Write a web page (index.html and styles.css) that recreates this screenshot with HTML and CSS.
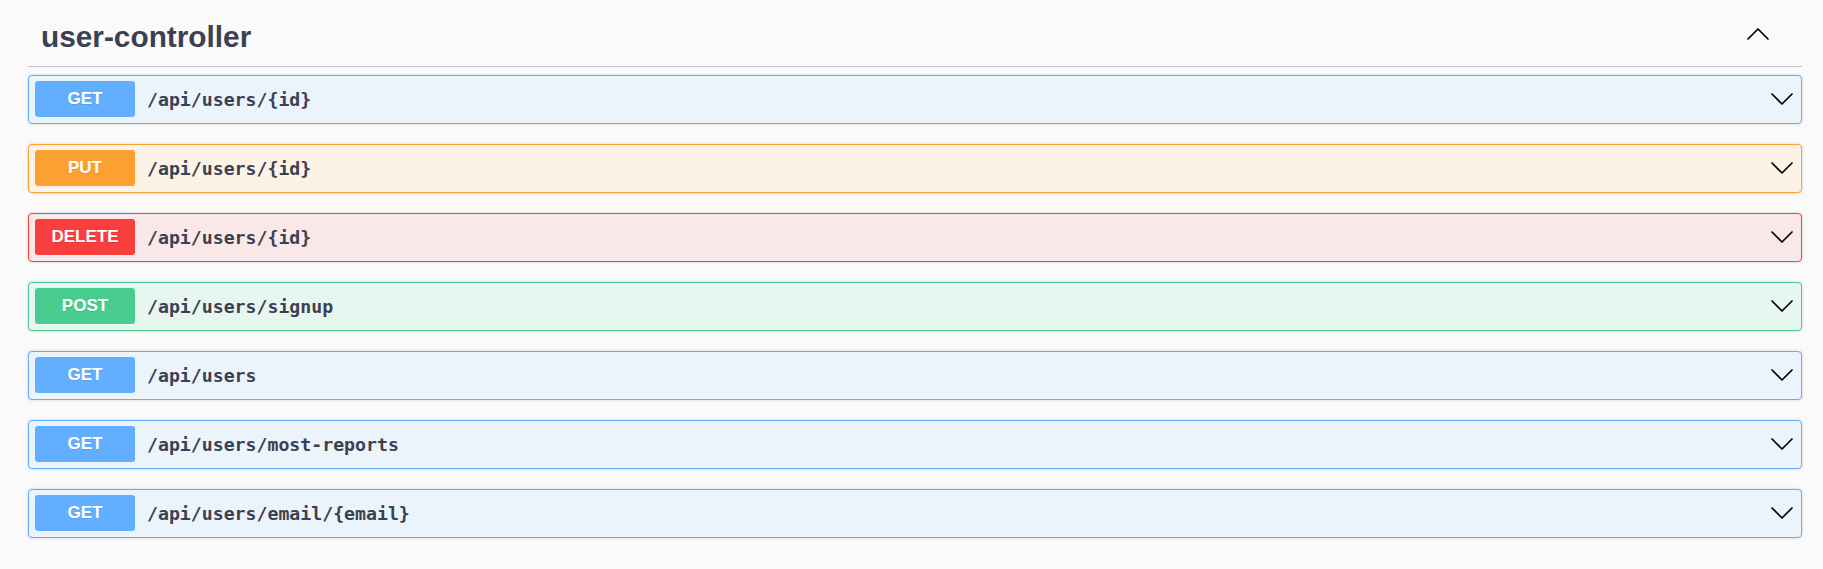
FILE: index.html
```html
<!DOCTYPE html>
<html lang="en">
<head>
<meta charset="utf-8">
<title>user-controller</title>
<link rel="stylesheet" href="styles.css">
</head>
<body>
<div class="tag-section">
  <div class="tag-header">
    <h3 class="tag-title">user-controller</h3>
    <svg class="chev-up" width="22" height="12" viewBox="0 0 22 12"><polyline points="1,11 11,1 21,11"/></svg>
  </div>

  <div class="opblock get">
    <span class="method">GET</span>
    <span class="path">/api/users/{id}</span>
    <svg class="chev" width="22" height="12" viewBox="0 0 22 12"><polyline points="1,1 11,11 21,1"/></svg>
  </div>
  <div class="opblock put">
    <span class="method">PUT</span>
    <span class="path">/api/users/{id}</span>
    <svg class="chev" width="22" height="12" viewBox="0 0 22 12"><polyline points="1,1 11,11 21,1"/></svg>
  </div>
  <div class="opblock delete">
    <span class="method">DELETE</span>
    <span class="path">/api/users/{id}</span>
    <svg class="chev" width="22" height="12" viewBox="0 0 22 12"><polyline points="1,1 11,11 21,1"/></svg>
  </div>
  <div class="opblock post">
    <span class="method">POST</span>
    <span class="path">/api/users/signup</span>
    <svg class="chev" width="22" height="12" viewBox="0 0 22 12"><polyline points="1,1 11,11 21,1"/></svg>
  </div>
  <div class="opblock get">
    <span class="method">GET</span>
    <span class="path">/api/users</span>
    <svg class="chev" width="22" height="12" viewBox="0 0 22 12"><polyline points="1,1 11,11 21,1"/></svg>
  </div>
  <div class="opblock get">
    <span class="method">GET</span>
    <span class="path">/api/users/most-reports</span>
    <svg class="chev" width="22" height="12" viewBox="0 0 22 12"><polyline points="1,1 11,11 21,1"/></svg>
  </div>
  <div class="opblock get">
    <span class="method">GET</span>
    <span class="path">/api/users/email/{email}</span>
    <svg class="chev" width="22" height="12" viewBox="0 0 22 12"><polyline points="1,1 11,11 21,1"/></svg>
  </div>
</div>
</body>
</html>
```

FILE: styles.css
```css
html, body {
  margin: 0;
  padding: 0;
  background: #fafafa;
}

.tag-section {
  padding: 0 21px 0 28px;
}

.tag-header {
  display: flex;
  align-items: center;
  height: 66px;
  border-bottom: 1px solid rgba(59, 65, 81, 0.3);
  margin-bottom: 8px;
}

.tag-title {
  flex: 1;
  margin: 0;
  padding: 6px 0 0 13px;
  font-family: "Liberation Sans", Arial, sans-serif;
  font-weight: bold;
  font-size: 29.8px;
  line-height: 33px;
  color: #3b4151;
}

.chev-up {
  margin-right: 33px;
  margin-top: 1px;
}

.chev-up polyline,
.chev polyline {
  fill: none;
  stroke: #000;
  stroke-width: 1.7;
  stroke-linecap: round;
  stroke-linejoin: round;
}

.opblock {
  display: flex;
  align-items: center;
  height: 49px;
  box-sizing: border-box;
  padding: 5px 8px 6px 6px;
  margin-bottom: 20px;
  border: 1px solid;
  border-radius: 4px;
  box-shadow: 0 0 3px rgba(0, 0, 0, 0.19);
}

.method {
  width: 100px;
  height: 36px;
  display: flex;
  align-items: center;
  justify-content: center;
  border-radius: 3px;
  color: #fff;
  font-family: "Liberation Sans", Arial, sans-serif;
  font-weight: bold;
  font-size: 17px;
  text-shadow: 0 1px 0 rgba(0, 0, 0, 0.1);
}

.path {
  flex: 1;
  padding-left: 12px;
  font-family: "DejaVu Sans Mono", "Liberation Mono", monospace;
  font-weight: bold;
  font-size: 18.2px;
  color: #3b4151;
}

.get { background: #ebf3fb; border-color: #61affe; }
.get .method { background: #61affe; }

.put { background: #fcf2e6; border-color: #fca130; }
.put .method { background: #fca130; }

.delete { background: #fae7e7; border-color: #f93e3e; }
.delete .method { background: #f93e3e; }

.post { background: #e8f6f0; border-color: #49cc90; }
.post .method { background: #49cc90; }
```
